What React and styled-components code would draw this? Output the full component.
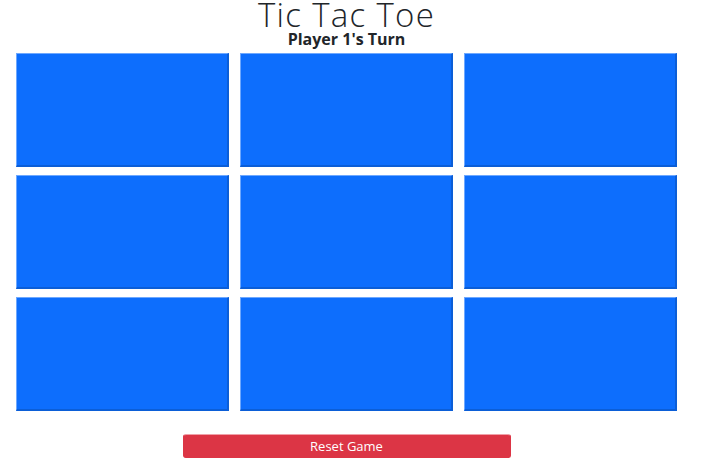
import React, { useState } from 'react';
import styled, { createGlobalStyle } from 'styled-components';

const GlobalStyle = createGlobalStyle`
  body {
    margin: 0;
    background: #ffffff;
    font-family: 'Open Sans', 'Liberation Sans', sans-serif;
  }
`;

const Page = styled.div`
  width: 693px;
  display: flex;
  flex-direction: column;
  align-items: center;
`;

const Title = styled.h1`
  margin: 0;
  font-family: 'Open Sans', sans-serif;
  font-weight: 300;
  font-size: 33px;
  line-height: 30px;
  color: #212529;
  letter-spacing: 1.3px;
`;

const Turn = styled.h2`
  margin: 0;
  font-family: 'Open Sans', sans-serif;
  font-weight: 700;
  font-size: 16px;
  line-height: 18px;
  color: #212529;
`;

const Board = styled.div`
  display: grid;
  grid-template-columns: repeat(3, 213px);
  grid-auto-rows: 114px;
  column-gap: 11px;
  row-gap: 8px;
  margin-top: 5px;
`;

const Cell = styled.button`
  box-sizing: border-box;
  background: #0d6efd;
  border-style: solid;
  border-width: 1px 2px 2px 1px;
  border-color: #6ea8fe #0b5ed7 #0b5ed7 #6ea8fe;
  padding: 0;
  cursor: pointer;
  font-family: 'Open Sans', sans-serif;
  font-size: 48px;
  color: #ffffff;
`;

const ResetButton = styled.button`
  margin-top: 23px;
  width: 328px;
  height: 24px;
  background: #dc3545;
  color: #ffffff;
  border: 1px solid #dc3545;
  border-top-color: #f0a0a8;
  border-radius: 3px;
  font-family: 'Open Sans', sans-serif;
  font-size: 13px;
  cursor: pointer;
`;

export default function App() {
  const [cells, setCells] = useState(Array(9).fill(''));
  const [player, setPlayer] = useState(1);

  const play = (i) => {
    if (cells[i]) return;
    const next = cells.slice();
    next[i] = player === 1 ? 'X' : 'O';
    setCells(next);
    setPlayer(player === 1 ? 2 : 1);
  };

  const reset = () => {
    setCells(Array(9).fill(''));
    setPlayer(1);
  };

  return (
    <Page>
      <GlobalStyle />
      <Title>Tic Tac Toe</Title>
      <Turn>Player {player}'s Turn</Turn>
      <Board>
        {cells.map((c, i) => (
          <Cell key={i} onClick={() => play(i)}>{c}</Cell>
        ))}
      </Board>
      <ResetButton onClick={reset}>Reset Game</ResetButton>
    </Page>
  );
}
